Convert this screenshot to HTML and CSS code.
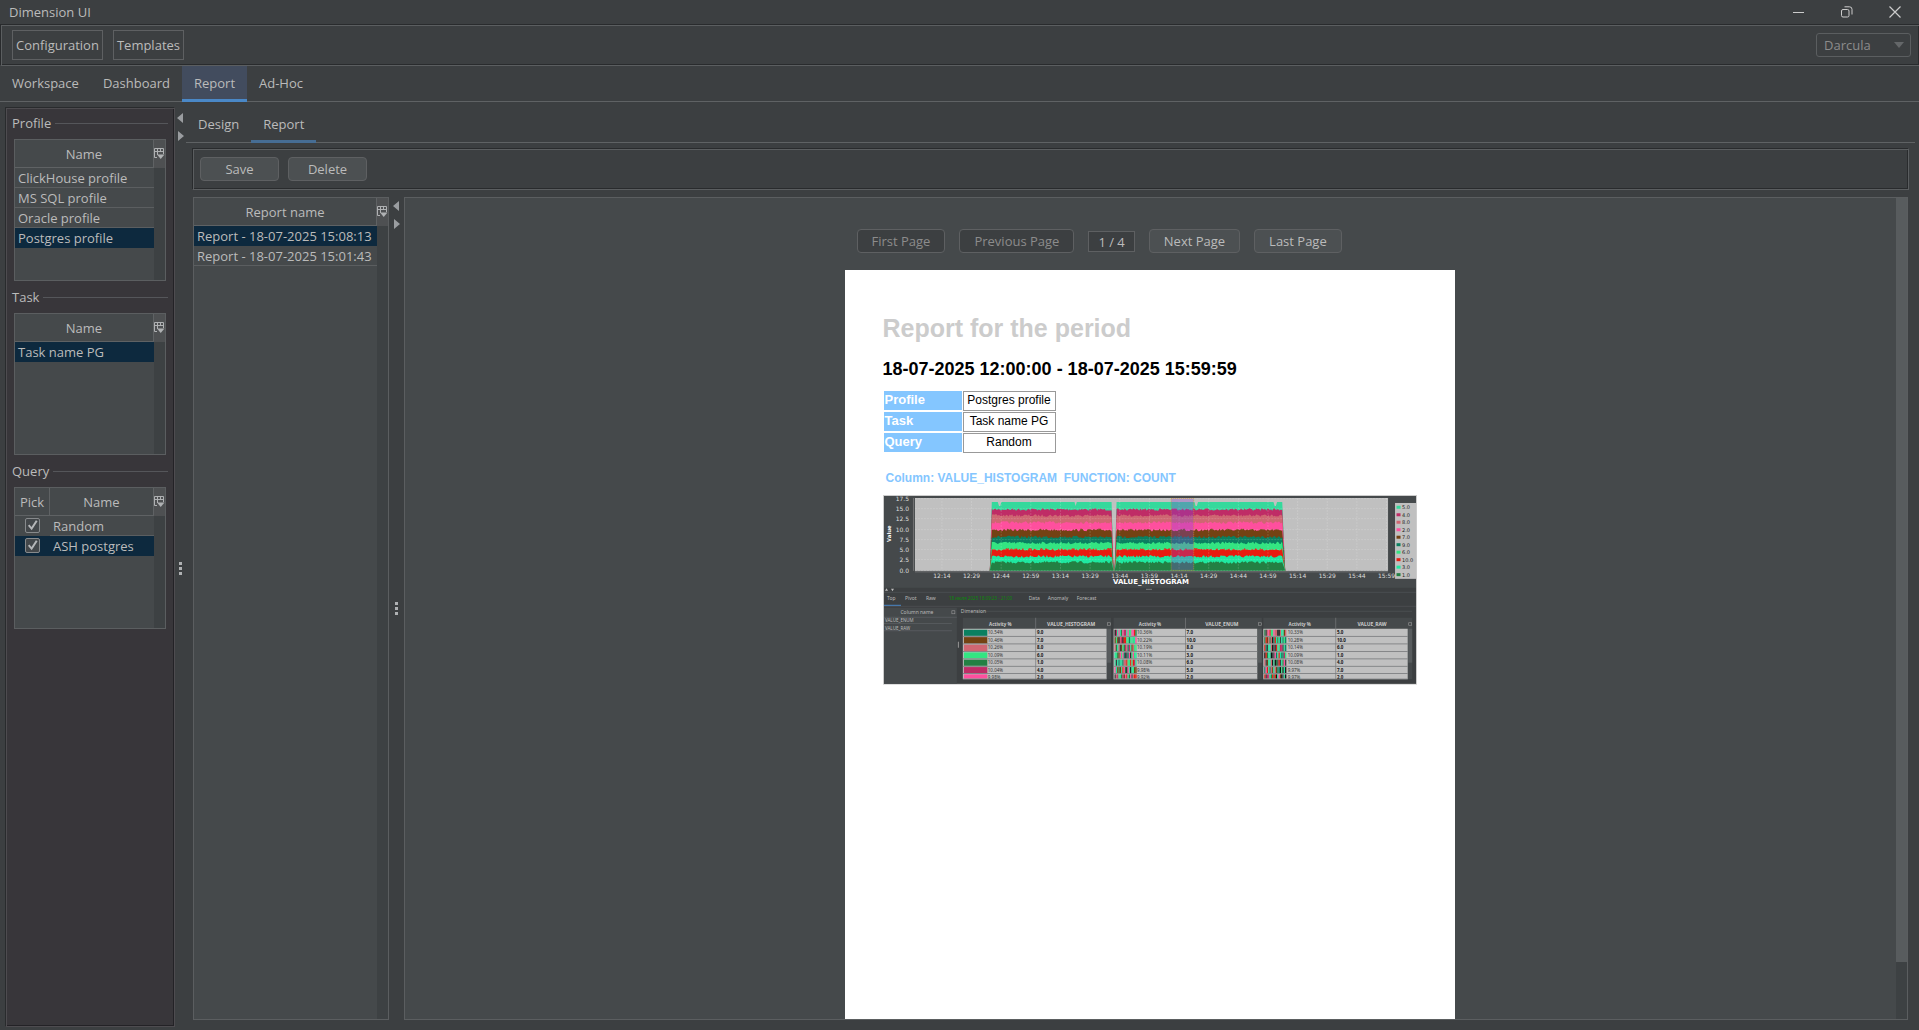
FILE: index.html
```html
<!DOCTYPE html>
<html lang="en">
<head>
<meta charset="utf-8">
<title>Dimension UI</title>
<link rel="stylesheet" href="styles.css">
</head>
<body>
<svg class="defs" width="0" height="0" aria-hidden="true">
  <symbol id="columns" viewBox="0 0 11 12">
    <path d="M3 9.500H.5V.5H9.500V6M.5 3.500H9.500M3.500 .5V7M6.500 .5V4" fill="none" stroke="#afb1b3"/>
    <path d="M3 6.500H10.500L6.700 11Z" fill="#afb1b3"/>
  </symbol>
</svg>

<header class="titlebar">
  <h1 class="app-title">Dimension UI</h1>
  <div class="window-controls">
    <button class="win-btn" aria-label="Minimize"><svg width="12" height="12"><path d="M0 6.500H11" stroke="#ccc" fill="none"/></svg></button>
    <button class="win-btn" aria-label="Restore"><svg width="12" height="12"><rect x=".5" y="3.500" width="7.500" height="7.500" rx="1.500" stroke="#ccc" fill="none"/><path d="M3.500 .8H8.500Q11 .8 11 3.300V8.500" stroke="#ccc" fill="none"/></svg></button>
    <button class="win-btn" aria-label="Close"><svg width="12" height="12"><path d="M.5 .5L11.500 11.500M11.500 .5L.5 11.500" stroke="#ccc" fill="none" stroke-width="1.200"/></svg></button>
  </div>
</header>

<div class="toolbar etched">
  <button class="tool-btn">Configuration</button>
  <button class="tool-btn">Templates</button>
  <div class="theme">
    <select class="theme-select" aria-label="Theme" disabled><option>Darcula</option></select>
  </div>
</div>

<nav class="tabs main-tabs">
  <button class="tab">Workspace</button>
  <button class="tab">Dashboard</button>
  <button class="tab tab-active">Report</button>
  <button class="tab">Ad-Hoc</button>
</nav>

<main class="body">
  <aside class="side etched">
    <section class="group">
      <h2 class="group-title">Profile</h2>
      <div class="grid-box">
        <table class="grid">
          <thead><tr><th>Name</th></tr></thead>
          <tbody>
            <tr><td>ClickHouse profile</td></tr>
            <tr><td>MS SQL profile</td></tr>
            <tr><td>Oracle profile</td></tr>
            <tr class="selected"><td>Postgres profile</td></tr>
          </tbody>
        </table>
        <div class="gutter"><button class="col-btn" aria-label="Columns"><svg width="11" height="12"><use href="#columns"/></svg></button></div>
      </div>
    </section>
    <section class="group">
      <h2 class="group-title">Task</h2>
      <div class="grid-box">
        <table class="grid">
          <thead><tr><th>Name</th></tr></thead>
          <tbody><tr class="selected"><td>Task name PG</td></tr></tbody>
        </table>
        <div class="gutter"><button class="col-btn" aria-label="Columns"><svg width="11" height="12"><use href="#columns"/></svg></button></div>
      </div>
    </section>
    <section class="group">
      <h2 class="group-title">Query</h2>
      <div class="grid-box">
        <table class="grid">
          <thead><tr><th class="pick">Pick</th><th>Name</th></tr></thead>
          <tbody>
            <tr><td class="pick"><input type="checkbox" class="check" id="q1" checked></td><td><label for="q1">Random</label></td></tr>
            <tr class="selected"><td class="pick"><input type="checkbox" class="check" id="q2" checked></td><td><label for="q2">ASH postgres</label></td></tr>
          </tbody>
        </table>
        <div class="gutter"><button class="col-btn" aria-label="Columns"><svg width="11" height="12"><use href="#columns"/></svg></button></div>
      </div>
    </section>
  </aside>

  <div class="splitter">
    <svg class="arrows" width="8" height="30"><path d="M6 0V10L0 5ZM1 18V28L7 23Z" fill="#9a9da0"/></svg>
    <svg class="dots" width="4" height="14"><path d="M0 0h3v3h-3zM0 5h3v3h-3zM0 10h3v3h-3z" fill="#afb1b3"/></svg>
  </div>

  <div class="content">
    <nav class="tabs sub-tabs">
      <button class="tab">Design</button>
      <button class="tab tab-current">Report</button>
    </nav>
    <div class="actions etched">
      <button class="btn btn-action">Save</button>
      <button class="btn btn-action">Delete</button>
    </div>
    <div class="panes">
      <div class="grid-box reports">
        <table class="grid">
          <thead><tr><th>Report name</th></tr></thead>
          <tbody>
            <tr class="selected"><td>Report - 18-07-2025 15:08:13</td></tr>
            <tr><td>Report - 18-07-2025 15:01:43</td></tr>
          </tbody>
        </table>
        <div class="gutter"><button class="col-btn" aria-label="Columns"><svg width="11" height="12"><use href="#columns"/></svg></button></div>
      </div>
      <div class="splitter splitter-inner">
        <svg class="arrows" width="8" height="30"><path d="M6 0V10L0 5ZM1 18V28L7 23Z" fill="#9a9da0"/></svg>
        <svg class="dots" width="4" height="14"><path d="M0 0h3v3h-3zM0 5h3v3h-3zM0 10h3v3h-3z" fill="#afb1b3"/></svg>
      </div>
      <div class="viewer">
        <div class="canvas">
          <div class="pager">
            <button class="btn" disabled>First Page</button>
            <button class="btn" disabled>Previous Page</button>
            <output class="page-no">1 / 4</output>
            <button class="btn">Next Page</button>
            <button class="btn">Last Page</button>
          </div>
          <article class="sheet">
            <h2 class="sheet-title">Report for the period</h2>
            <h3 class="sheet-period">18-07-2025 12:00:00 - 18-07-2025 15:59:59</h3>
            <table class="facts">
              <tr><th>Profile</th><td>Postgres profile</td></tr>
              <tr><th>Task</th><td>Task name PG</td></tr>
              <tr><th>Query</th><td>Random</td></tr>
            </table>
            <h4 class="sheet-column">Column: VALUE_HISTOGRAM&nbsp; FUNCTION: COUNT</h4>
            <svg class="snapshot" id="snapshot" viewBox="0 0 535 190" role="img" aria-label="VALUE_HISTOGRAM chart"></svg>
          </article>
        </div>
        <div class="scroll"><div class="thumb"></div></div>
      </div>
    </div>
  </div>
</main>
<script src="chart.js"></script>
</body>
</html>
```
FILE: styles.css
```css
* { box-sizing: border-box; }
body {
  margin: 0;
  height: 100vh;
  display: flex;
  flex-direction: column;
  overflow: hidden;
  background: #3c3f41;
  color: #bbb;
  font: 13px/18px "Open Sans", "Noto Sans", sans-serif;
}
button, select, input { font: inherit; color: inherit; margin: 0; }
h1, h2, h3, h4 { margin: 0; font: inherit; }
svg { display: block; }
.defs { position: absolute; }

.etched {
  border: 1px solid #5b5e60;
  border-top-color: #292b2d;
  border-left-color: #292b2d;
  box-shadow: inset 1px 1px #5b5e60, inset -1px -1px #292b2d;
}

.titlebar { display: flex; align-items: center; justify-content: space-between; height: 24px; padding-left: 9px; flex: none; }
.window-controls { display: flex; }
.win-btn { width: 48px; height: 24px; display: flex; align-items: center; justify-content: center; background: none; border: 0; padding: 0; }

.toolbar { display: flex; align-items: center; gap: 10px; height: 42px; padding: 0 8px 0 11px; flex: none; border-right: 0; }
.tool-btn { height: 30px; padding: 0 3px; background: none; border: 1px solid #5e6062; }
.theme { position: relative; margin-left: auto; }
.theme-select {
  appearance: none;
  display: block;
  width: 95px;
  height: 24px;
  padding: 0 7px;
  background: #3c3f41;
  border: 1px solid #5b5e60;
  border-radius: 3px;
  color: #8c8c8c;
  opacity: 1;
}
.theme::after { content: ""; position: absolute; right: 7px; top: 9px; width: 10px; height: 6px; background: #646769; clip-path: polygon(0 0, 100% 0, 50% 100%); }

.tabs { display: flex; height: 36px; border-bottom: 1px solid #5f6264; flex: none; }
.tab { padding: 0 12px 2px; border: 0; background: none; height: 36px; }
.tab-active { background: #424c5e; box-shadow: inset 0 -3px #4a88c7; }
.tab-current { box-shadow: inset 0 -3px #466d94; }

.body { display: flex; flex: 1; min-height: 0; }
.side { width: 170px; margin: 5px 0 3px 5px; padding-top: 1px; background: #38363a; flex: none; border-right-color: #4e4c50; border-bottom-color: #4e4c50; box-shadow: inset 1px 1px #4e4c50, inset -1px -1px #232226; }
.group { margin-bottom: 2px; }
.group-title { display: flex; align-items: center; gap: 4px; height: 28px; margin: 0 6px 2px; }
.group-title::after { content: ""; flex: 1; height: 1px; background: #55565a; }
.grid-box { display: flex; height: 142px; margin: 0 8px; background: #45494b; border: 1px solid #5b5e60; }
.grid { flex: 1; align-self: flex-start; border-collapse: separate; border-spacing: 0; table-layout: fixed; }
.grid th { height: 28px; padding: 0; font-weight: normal; border-right: 1px solid #5f6264; border-bottom: 1px solid #5f6264; }
.grid td { height: 20px; padding: 0 0 0 3px; line-height: 18px; border-bottom: 1px solid #5b5e60; white-space: nowrap; overflow: hidden; }
.grid .selected td { background: #0d293e; border-color: #0d293e; }
.grid .pick { width: 35px; }
.grid td.pick { padding: 0 0 0 10px; border-color: transparent; }
.check { appearance: none; display: block; width: 15px; height: 15px; background: #43474a; border: 1px solid #878a8c; border-radius: 2px; }
.check::before { content: ""; display: block; width: 13px; height: 13px; background: #b4b6b8; clip-path: polygon(15% 52%, 26% 42%, 42% 62%, 76% 10%, 89% 18%, 44% 86%); }
.gutter { width: 11px; background: #3d4143; flex: none; }
.col-btn { display: flex; align-items: center; justify-content: center; width: 11px; height: 28px; padding: 0; border: 0; background: #4e5052; }

.splitter { position: relative; width: 11px; padding-top: 6px; flex: none; display: flex; align-items: center; justify-content: center; }
.arrows { position: absolute; top: 11px; left: 2px; }

.content { flex: 1; min-width: 0; display: flex; flex-direction: column; padding: 5px 4px 10px 0; }
.actions { display: flex; align-items: center; gap: 9px; height: 42px; margin: 5px 6px 7px; padding: 0 7px; flex: none; }
.btn { height: 24px; padding: 0 14px; background: #4c5052; border: 1px solid #5e6062; border-radius: 4px; line-height: 18px; }
.btn-action { width: 79px; padding: 0; }
.btn:disabled { background: #3c3f41; color: #8c8c8c; }
.panes { display: flex; flex: 1; min-height: 0; margin: 0 7px; }
.reports { width: 196px; height: auto; margin: 0; flex: none; }
.splitter-inner { width: 15px; padding-top: 0; }
.splitter-inner .arrows { top: 4px; left: 4px; }

.viewer { display: flex; flex: 1; min-width: 0; background: #45494b; border: 1px solid #5b5e60; }
.canvas { flex: 1; min-width: 0; overflow: hidden; display: flex; flex-direction: column; align-items: center; padding: 31px 2px 0 0; }
.pager { display: flex; align-items: center; gap: 14px; width: 610px; padding-left: 12px; margin-bottom: 17px; flex: none; }
.page-no { height: 21px; padding: 0 9px; background: #3c3f41; border: 1px solid #5e6062; line-height: 21px; white-space: nowrap; }
.scroll { width: 11px; background: #3d4143; flex: none; }
.thumb { height: 93%; background: #585c5e; }

.sheet { width: 610px; flex: 1 0 auto; padding: 43px 38px; background: #fff; color: #000; font-family: "Liberation Sans", Arial, sans-serif; }
.sheet-title { font-size: 25px; line-height: 30px; font-weight: bold; color: #ccc; }
.sheet-period { margin-top: 13px; font-size: 18px; line-height: 26px; font-weight: bold; }
.facts { margin-top: 8px; border-spacing: 1px; font-size: 12px; line-height: 17px; }
.facts th { width: 78px; padding: 0 0 2px 1px; background: #84c6ff; color: #fff; text-align: left; background-clip: padding-box; font-size: 13px; border-bottom: 1px solid #fff; }
.facts td { width: 93px; padding: 0 0 1px; border: 1px solid #999; text-align: center; }
.sheet-column { margin: 15px 0 8px 3px; font-size: 12px; line-height: 18px; font-weight: bold; color: #84c6ff; }
.snapshot { width: 100%; height: auto; font-family: "Noto Sans", sans-serif; font-size: 5px; }
.snapshot .axis { font-family: "DejaVu Sans", sans-serif; font-size: 6px; fill: #ddd; }
.snapshot .axis-title { font-family: "DejaVu Sans", sans-serif; font-size: 7px; font-weight: bold; fill: #fff; }
.snapshot .legend { font-family: "DejaVu Sans", sans-serif; font-size: 5px; fill: #222; }
.snapshot .strong { font-weight: bold; }
```
FILE: chart.js
```js
const svg = document.getElementById("snapshot");
let out = "";
let seed = 7;
const rnd = () => (seed = (seed * 16807) % 2147483647) / 2147483647;
const rect = (x, y, w, h, fill, extra = "") => { out += `<rect x="${x}" y="${y}" width="${w}" height="${h}" fill="${fill}" ${extra}/>`; };
const text = (x, y, s, fill = "#bbb", extra = "") => { out += `<text x="${x}" y="${y}" fill="${fill}" ${extra}>${s}</text>`; };

const colors = ["#35d99c", "#bf2c66", "#cf6672", "#ff4f9e", "#734213", "#0a8060", "#33e582", "#e81c10", "#1fe8a0", "#238043"];
const tops = [7, 14.5, 20.5, 27.5, 35, 42, 48, 54.5, 61.5, 67.5];

rect(0, 0, 535, 190, "#ccc");
rect(1, 1, 533, 188, "#45494b");
rect(32, 3, 474, 73, "#c0c0c0");

// Stacked areas, with a short gap between the two runs of samples
function areas(x0, x1, endSlope) {
  tops.forEach((t, i) => {
    let d = `M${x0 - 2} 76L${x0} ${t}`;
    for (let x = x0; x <= x1; x += 1.2) {
      let y = i ? t + (rnd() - 0.5) * 2.6 : t;
      if (!i && [117, 193, 314, 393].some(n => Math.abs(n - x) < 1)) y += 4;
      d += `L${x.toFixed(1)} ${y.toFixed(1)}`;
    }
    out += `<path d="${d}L${x1} ${t}L${x1 + endSlope} 76Z" fill="${colors[i]}"/>`;
  });
}
areas(109, 229, 2);
areas(234, 400, 3);

const ys = [3.7, 13.7, 23.7, 34.7, 44.7, 54.7, 64.7, 75.7];
["17.5", "15.0", "12.5", "10.0", "7.5", "5.0", "2.5", "0.0"].forEach((s, i) => {
  text(26, ys[i] + 2, s, "", 'class="axis" text-anchor="end"');
  out += `<path d="M32 ${ys[i]}H506" stroke="#fff" stroke-opacity=".3" stroke-width=".5" stroke-dasharray="2 1"/>`;
});
for (let i = 0; i < 16; i++) {
  const m = 734 + i * 15, x = 59 + i * 29.7;
  text(x, 83.5, `${Math.floor(m / 60)}:${m % 60}`, "", 'class="axis" text-anchor="middle"');
  out += `<path d="M${x} 3V76" stroke="#fff" stroke-opacity=".3" stroke-width=".5" stroke-dasharray="2 1"/>`;
}
out += '<path d="M30.500 3V76M32 77H506" stroke="#888" stroke-width=".7" fill="none"/>';
rect(288.7, 3.500, 22.600, 72, "#8a40d0", 'fill-opacity=".33" stroke="#d9a020" stroke-width=".6" stroke-dasharray="1 1"');
text(0, 0, "Value", "#fff", 'class="strong" font-size="6" transform="translate(8 47) rotate(-90)"');
text(268.500, 89, "VALUE_HISTOGRAM", "", 'class="axis-title" text-anchor="middle"');

rect(513, 8, 21, 76, "#c0c0c0");
["5.0", "4.0", "8.0", "2.0", "7.0", "9.0", "6.0", "10.0", "3.0", "1.0"].forEach((s, i) => {
  const y = 12.3 + i * 7.5;
  rect(514.500, y - 1.500, 4, 3, colors[i]);
  text(520, y + 2, s, "", 'class="legend"');
});

// Lower pane: tabs and column list
rect(1, 93, 533, 96, "#3c3f41");
out += '<path d="M2 96h3l-1.500-2.500zM8 94h3l-1.500 2.500z" fill="#bbb"/>';
out += '<path d="M264 94.500h6" stroke="#bbb" stroke-dasharray="1 1" fill="none"/>';
out += '<path d="M1 97.500H534M1 111.500H534M93 116.500H530" stroke="#54575a" stroke-width=".6" fill="none"/>';
rect(1, 110, 17, 1, "#4a88c7");
text(4, 105.500, "Top");
text(22, 105.500, "Pivot");
text(43, 105.500, "Raw");
text(66, 105.500, "18 июля 2025 18:09:23 - 21:00", "#0a8a0a", 'font-size="4.500"');
text(146, 105.500, "Data");
text(165, 105.500, "Anomaly");
text(194, 105.500, "Forecast");
rect(1, 113, 73, 76, "#45494b");
text(34, 119.500, "Column name", "#bbb", 'text-anchor="middle"');
out += '<path d="M1 122.500H74M1 128.700H69M1 136H69" stroke="#63666a" stroke-width=".6" fill="none"/>';
text(2, 127.500, "VALUE_ENUM", "#bbb", 'font-size="4.500"');
text(2, 135, "VALUE_RAW", "#bbb", 'font-size="4.500"');
rect(69, 116, 3, 3, "none", 'stroke="#999" stroke-width=".6"');
rect(75, 147, 1, 6, "#999");
text(78, 118.500, "Dimension");

const edges = [134.3, 141.7, 149.3, 157, 164.3, 171.7, 179, 184.5];
const mix = colors.concat(["#111", "#3c3f41"]);
const solid = ["#0a8060", "#734213", "#cf6672", "#33e582", "#238043", "#bf2c66", "#ff4f9e"];
[
  { x: 80, bar: 104.5, div: 152.7, end: 224, name: "VALUE_HISTOGRAM", mid: 188.500, act: 117.500, solid: true,
    pct: ["10.54%", "10.46%", "10.26%", "10.09%", "10.05%", "10.04%", "9.98%"], val: ["9.0", "7.0", "8.0", "6.0", "1.0", "4.0", "2.0"] },
  { x: 231, bar: 254, div: 302.7, end: 375, name: "VALUE_ENUM", mid: 339.500, act: 267.500,
    pct: ["10.36%", "10.22%", "10.19%", "10.11%", "10.08%", "9.98%", "9.92%"], val: ["7.0", "10.0", "8.0", "3.0", "6.0", "5.0", "2.0"] },
  { x: 381, bar: 405, div: 453.3, end: 525.7, name: "VALUE_RAW", mid: 490, act: 417.500,
    pct: ["10.33%", "10.28%", "10.14%", "10.09%", "10.08%", "9.97%", "9.97%"], val: ["5.0", "10.0", "6.0", "1.0", "4.0", "7.0", "2.0"] }
].forEach(t => {
  rect(t.x, 123, t.end - t.x + 4.5, 61.500, "#45494b");
  text(t.act, 131, "Activity %", "#ccc", 'class="strong" text-anchor="middle" font-size="4.500"');
  text(t.mid, 131, t.name, "#ccc", 'class="strong" text-anchor="middle"');
  rect(t.x, 134, t.end - t.x, 50.500, "#c0c0c0");
  rect(t.end + .5, 134, 4, 34, "#585c5e");
  rect(t.end + 1, 128, 3, 2.500, "none", 'stroke="#999" stroke-width=".6"');
  for (let i = 0; i < 7; i++) {
    const y = edges[i] + .7, h = edges[i + 1] - edges[i] - 1.3;
    if (t.solid) rect(t.x + 1, y, t.bar - t.x - 1, h, solid[i]);
    else for (let x = t.x + 1; x < t.bar - 1; x += 1.3) rect(x, y, 1.3, h, mix[Math.floor(rnd() * mix.length)]);
    text(t.bar + .5, y + 4.600, t.pct[i], "#333", 'font-size="4.500"');
    text(t.div + 1.500, y + 4.600, t.val[i], "#111", 'class="strong" font-size="4.500"');
    rect(t.x, edges[i + 1] - .5, t.end - t.x, .8, "#77797b");
  }
  rect(t.div, 123, .7, 61.500, "#77797b");
});
svg.innerHTML = out;
```
